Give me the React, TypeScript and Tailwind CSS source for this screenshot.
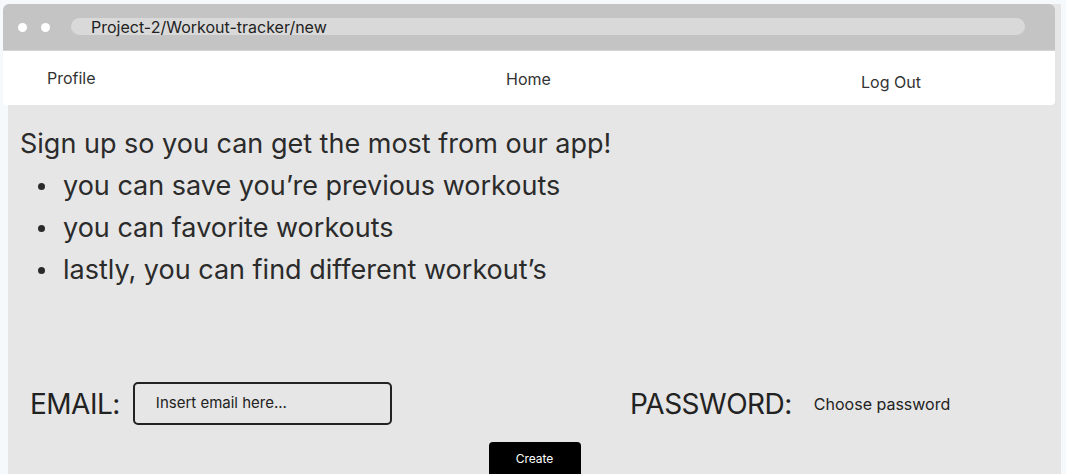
export default function App() {
  const perks = [
    'you can save you’re previous workouts',
    'you can favorite workouts',
    'lastly, you can find different workout’s',
  ]

  return (
    <div
      className="w-[1066px] h-[474px] overflow-hidden bg-[#f5f9fc] pt-[19px] pl-[8px]"
      style={{ fontFamily: 'Inter, "Noto Sans", sans-serif' }}
    >
      <div className="w-[1053px] h-[470px] bg-[#e6e6e6] text-[#2b2b2b]">
        {/* browser chrome */}
        <div className="-ml-[5px] -mt-[15px] w-[1052px]">
          <div className="h-[46px] bg-[#c4c4c4] rounded-t-[6px] flex items-start pt-[14px] pl-[15px] pr-[30px]">
            <div className="flex gap-[14px] mt-[5px]">
              <span className="w-[9px] h-[9px] rounded-full bg-white" />
              <span className="w-[9px] h-[9px] rounded-full bg-white" />
            </div>
            <div className="ml-[21px] flex-1 h-[17px] rounded-full bg-[#d9d9d9] flex items-center pl-[20px] text-[16px] text-[#222]">
              Project-2/Workout-tracker/new
            </div>
          </div>
          <div className="h-px bg-[#d4d4d4]" />
          <div className="relative h-[54px] bg-white rounded-b-[4px] text-[16px] text-[#333]">
            <span className="absolute left-[44px] top-[15px]">Profile</span>
            <span className="absolute left-[503px] top-[16px]">Home</span>
            <span className="absolute left-[858px] top-[19px]">Log Out</span>
          </div>
        </div>

        {/* content */}
        <div className="pl-[12px] pt-[18px] text-[27px] leading-[42px]">
          <h1>Sign up so you can get the most from our app!</h1>
          <ul>
            {perks.map((p) => (
              <li key={p} className="flex items-center">
                <span className="ml-[18px] w-[7px] h-[7px] rounded-full bg-[#2b2b2b]" />
                <span className="ml-[18px]">{p}</span>
              </li>
            ))}
          </ul>
        </div>

        <div className="mt-[91px] flex items-center pl-[22px]">
          <div className="w-[600px] flex items-center">
            <span className="text-[28px] tracking-[-0.5px] text-[#222]">EMAIL:</span>
            <div className="ml-[13px] w-[259px] h-[43px] border-2 border-[#222] rounded-[5px] flex items-center pl-[21px] text-[15px] text-[#222]">
              Insert email here...
            </div>
          </div>
          <span className="text-[28px] tracking-[-0.5px] text-[#222]">PASSWORD:</span>
          <span className="ml-[22px] text-[16px] text-[#222]">Choose password</span>
        </div>

        <div className="mt-[17px] flex justify-center">
          <button className="w-[92px] h-[40px] bg-black text-white text-[12px] rounded-[4px] pb-[7px]">
            Create
          </button>
        </div>
      </div>
    </div>
  )
}
